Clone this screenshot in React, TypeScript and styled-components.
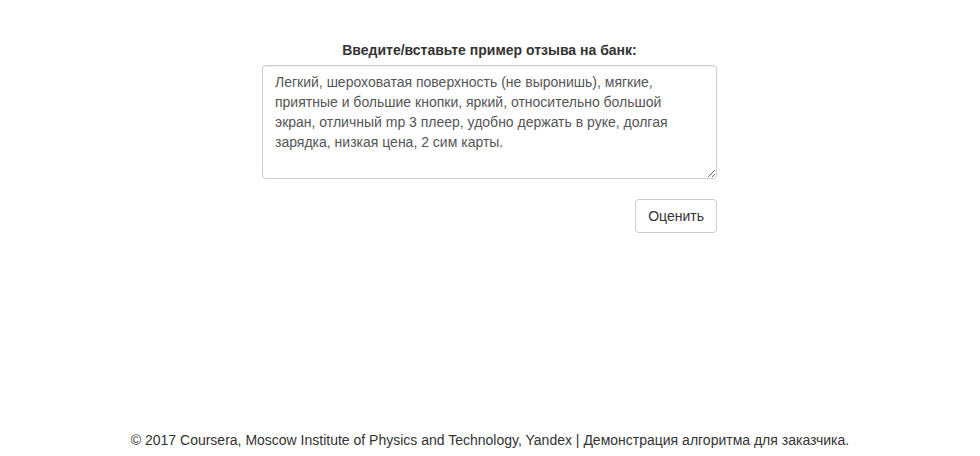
import React from "react";
import styled, { createGlobalStyle } from "styled-components";

const Global = createGlobalStyle`
  html, body { margin: 0; padding: 0; background: #fff; }
  body {
    font-family: "Liberation Sans", Arial, Helvetica, sans-serif;
    font-size: 14px;
    line-height: 1.42857143;
    color: #333;
  }
  * { box-sizing: border-box; }
`;

const Page = styled.div`
  height: 100vh;
  display: flex;
  flex-direction: column;
`;

const Main = styled.main`
  padding-top: 40px;
  display: flex;
  justify-content: center;
`;

const Form = styled.form`
  width: 455px;
  margin-right: 1px;
  display: flex;
  flex-direction: column;
`;

const Label = styled.label`
  font-weight: bold;
  text-align: center;
  margin-bottom: 5px;
  display: block;
`;

const TextArea = styled.textarea`
  width: 100%;
  height: 114px;
  padding: 6px 12px;
  font: inherit;
  font-size: 14px;
  line-height: 20px;
  color: #555;
  background: #fff;
  border: 1px solid #ccc;
  border-radius: 4px;
  box-shadow: inset 0 1px 1px rgba(0, 0, 0, 0.075);
  resize: vertical;
  outline: none;
  display: block;
`;

const Actions = styled.div`
  display: flex;
  justify-content: flex-end;
  margin-top: 20px;
`;

const Button = styled.button`
  font-family: inherit;
  font-size: 14px;
  line-height: 20px;
  padding: 6px 12px;
  color: #333;
  background: #fff;
  border: 1px solid #ccc;
  border-radius: 4px;
  cursor: pointer;
`;

const Footer = styled.footer`
  margin-top: auto;
  text-align: center;
  padding-bottom: 6px;
  color: #333;
`;

const text =
  "Легкий, шероховатая поверхность (не выронишь), мягкие, приятные и большие кнопки, яркий, относительно большой экран, отличный mp 3 плеер, удобно держать в руке, долгая зарядка, низкая цена, 2 сим карты.";

export default function App() {
  return (
    <Page>
      <Global />
      <Main>
        <Form onSubmit={(e) => e.preventDefault()}>
          <Label htmlFor="review">Введите/вставьте пример отзыва на банк:</Label>
          <TextArea id="review" rows={5} defaultValue={text} />
          <Actions>
            <Button type="submit">Оценить</Button>
          </Actions>
        </Form>
      </Main>
      <Footer>
        © 2017 Coursera, Moscow Institute of Physics and Technology, Yandex | Демонстрация алгоритма для заказчика.
      </Footer>
    </Page>
  );
}
